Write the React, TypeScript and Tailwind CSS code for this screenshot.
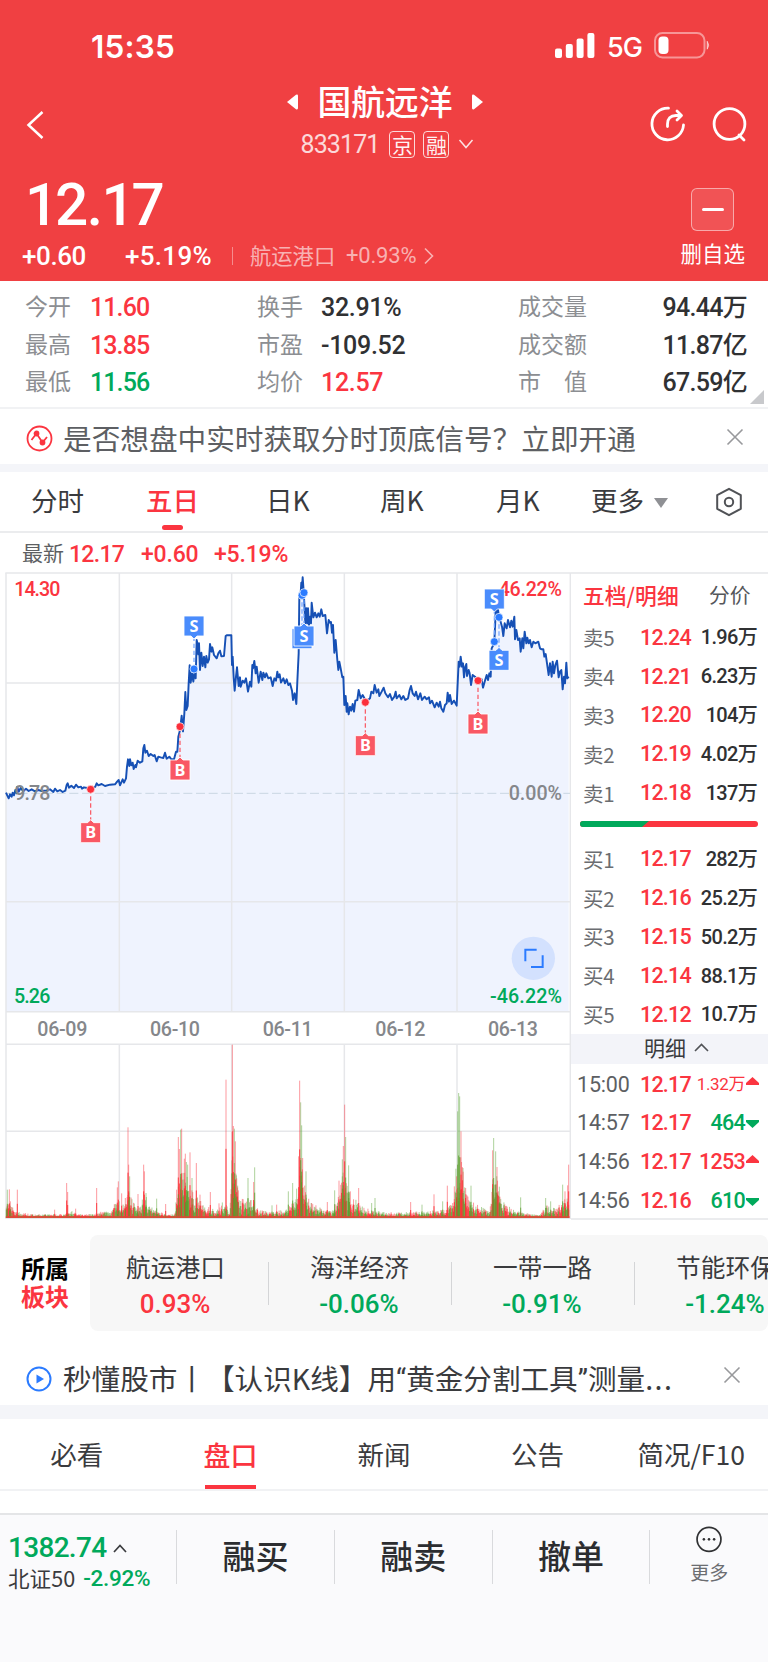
import React from "react";

const CJK = "font-['Noto_Sans_CJK_SC',sans-serif]";
const NUM = "font-['Roboto','Noto_Sans_CJK_SC',sans-serif]";

/* ---------- chart data, in thirds of a pixel ---------- */

const PRICE =
  "18,698 22,707 26,715 30,703 35,710 38,698 42,706 46,690 50,700 52,680 56,695 62,684 70,694 78,686 86,693 95,688 105,694 115,690 125,693 140,691 150,688 160,696 165,686 172,694 180,690 188,696 196,692 200,675 203,670 207,683 214,677 222,684 228,674 235,682 243,680 246,686 252,682 262,684 270,688 280,684 286,680 290,670 295,676 305,672 315,678 330,674 345,673 352,664 356,660 360,676 368,658 372,668 378,655 381,620 384,598 388,618 390,598 394,616 398,608 401,627 406,615 408,622 413,602 420,608 427,604 430,565 433,555 436,578 441,572 446,588 452,582 460,588 464,585 470,604 475,590 482,592 490,594 495,578 500,596 508,590 514,598 522,598 528,575 532,575 535,530 540,510 545,467 549,514 553,460 556,396 559,450 563,438 566,370 569,316 572,368 576,340 580,365 584,330 587,355 590,240 592,250 595,283 597,250 600,330 604,278 608,318 612,290 616,322 619,288 623,308 627,298 630,252 634,275 637,262 642,285 650,295 655,280 660,272 664,289 672,288 677,228 680,226 694,226 696,315 698,290 701,352 704,392 708,350 711,322 716,378 720,352 722,380 728,362 733,368 738,355 744,395 750,365 754,380 757,315 759,325 763,303 767,340 770,320 776,368 782,335 787,360 790,338 795,352 799,340 805,355 812,352 818,378 823,355 828,362 832,335 835,352 839,343 843,368 850,355 855,370 860,358 865,375 870,370 876,392 879,420 884,400 889,432 892,365 896,280 898,110 902,100 904,68 906,85 908,52 911,95 913,130 916,190 919,145 922,190 924,145 927,195 930,170 933,190 935,128 940,172 945,158 950,172 955,160 959,170 964,148 968,168 976,165 981,220 986,180 990,188 993,186 996,218 999,195 1003,278 1007,240 1012,300 1015,330 1018,305 1022,325 1027,352 1030,350 1033,435 1037,408 1040,455 1042,430 1046,463 1050,440 1054,452 1058,432 1062,455 1066,422 1072,420 1076,390 1082,415 1088,405 1096,420 1104,420 1110,415 1114,395 1120,400 1124,375 1130,398 1135,388 1138,408 1145,395 1151,383 1156,400 1164,412 1170,402 1176,420 1183,410 1187,395 1190,415 1198,405 1204,418 1210,408 1216,420 1224,415 1229,390 1233,378 1238,400 1244,408 1248,395 1254,418 1261,400 1266,420 1274,410 1280,418 1287,412 1290,430 1296,422 1304,442 1310,428 1316,440 1320,425 1324,445 1330,455 1335,435 1340,430 1343,398 1347,425 1350,405 1355,432 1362,422 1370,437 1373,370 1376,305 1379,320 1382,290 1386,320 1389,310 1392,352 1396,320 1399,312 1401,348 1406,330 1409,340 1413,375 1418,345 1425,350 1434,362 1445,358 1449,383 1454,365 1460,345 1464,360 1468,340 1472,350 1475,265 1480,255 1483,245 1486,180 1488,120 1491,165 1494,148 1497,172 1501,182 1506,200 1510,228 1514,190 1520,205 1524,180 1530,202 1534,182 1538,200 1543,170 1545,238 1549,210 1554,240 1559,235 1562,275 1567,235 1570,265 1574,215 1579,250 1582,233 1586,250 1590,240 1595,262 1600,245 1606,250 1615,245 1620,265 1625,268 1630,268 1633,290 1637,282 1641,310 1646,345 1650,310 1655,350 1658,305 1662,340 1666,315 1671,302 1676,352 1680,335 1684,330 1688,388 1692,350 1695,370 1699,308 1702,355 1706,350";

const ENVELOPE: [number, number][] = [
  [18, 60], [30, 35], [40, 22], [60, 12], [100, 8], [190, 8], [205, 20], [230, 8], [285, 8], [300, 14], [330, 14], [345, 35], [357, 50], [365, 30], [380, 60], [390, 60], [400, 40], [415, 20], [425, 40], [435, 70], [445, 30], [470, 15], [500, 8], [525, 8], [532, 80], [545, 120], [560, 100], [575, 70], [590, 55], [610, 30], [650, 20], [670, 40], [680, 30], [690, 8], [695, 160], [705, 190], [712, 80], [725, 45], [760, 45], [775, 20], [810, 12], [860, 20], [880, 45], [893, 60], [900, 170], [908, 120], [918, 60], [940, 35], [970, 18], [1000, 18], [1015, 50], [1030, 120], [1040, 80], [1055, 55], [1080, 30], [1120, 15], [1200, 12], [1280, 15], [1340, 20], [1362, 40], [1370, 150], [1385, 160], [1395, 70], [1410, 40], [1450, 25], [1470, 20], [1480, 130], [1492, 100], [1505, 40], [1540, 20], [1590, 8], [1620, 8], [1640, 30], [1670, 25], [1690, 45], [1707, 60],
];

const SPIKES: [number, number, "r" | "g"][] = [
  [22, 85, "g"], [28, 86, "r"], [31, 50, "r"], [52, 85, "r"], [164, 25, "r"], [200, 105, "r"], [203, 78, "r"], [227, 28, "r"], [290, 90, "r"], [352, 92, "r"], [355, 110, "r"], [365, 74, "r"], [376, 60, "r"], [384, 272, "r"], [386, 160, "r"], [389, 125, "g"], [414, 72, "r"], [431, 160, "r"], [433, 140, "r"], [438, 75, "g"], [470, 58, "g"], [497, 42, "r"], [530, 85, "r"], [535, 243, "r"], [538, 207, "r"], [542, 265, "g"], [545, 268, "r"], [553, 178, "r"], [556, 193, "r"], [559, 168, "g"], [563, 160, "g"], [570, 197, "r"], [576, 120, "g"], [589, 165, "r"], [600, 70, "r"], [631, 78, "r"], [657, 44, "r"], [678, 415, "r"], [697, 520, "r"], [700, 276, "r"], [703, 268, "g"], [706, 230, "r"], [709, 128, "g"], [713, 97, "g"], [744, 120, "g"], [761, 108, "r"], [764, 152, "g"], [816, 38, "g"], [830, 40, "r"], [865, 80, "g"], [878, 105, "g"], [890, 88, "g"], [896, 185, "r"], [899, 412, "r"], [902, 347, "g"], [905, 278, "g"], [908, 180, "r"], [918, 140, "g"], [935, 45, "r"], [982, 48, "r"], [1004, 83, "g"], [1017, 112, "r"], [1027, 176, "g"], [1030, 216, "r"], [1034, 340, "r"], [1037, 243, "g"], [1046, 158, "g"], [1051, 80, "r"], [1076, 90, "r"], [1115, 45, "g"], [1125, 60, "g"], [1232, 48, "r"], [1266, 40, "g"], [1302, 71, "r"], [1328, 50, "g"], [1342, 97, "r"], [1363, 95, "r"], [1370, 125, "r"], [1373, 320, "g"], [1376, 375, "g"], [1379, 365, "g"], [1383, 260, "r"], [1389, 150, "g"], [1397, 90, "r"], [1413, 97, "g"], [1478, 203, "r"], [1481, 240, "g"], [1487, 200, "g"], [1491, 153, "r"], [1498, 94, "g"], [1562, 62, "g"], [1637, 60, "g"], [1652, 50, "g"], [1688, 100, "g"], [1695, 80, "r"], [1703, 98, "r"], [1706, 160, "r"],
];

function levelAt(u: number) {
  for (let i = 1; i < ENVELOPE.length; i++) {
    const [u1, h1] = ENVELOPE[i];
    if (u <= u1) {
      const [u0, h0] = ENVELOPE[i - 1];
      return h0 + ((h1 - h0) * (u - u0)) / (u1 - u0);
    }
  }
  return ENVELOPE[ENVELOPE.length - 1][1];
}

function buildVolume() {
  const paths = { r: "", g: "", rl: "", gl: "" };
  let seed = 7;
  const rnd = () => {
    seed = (seed * 16807) % 2147483647;
    return seed / 2147483647;
  };
  const bar = (u: number, h: number) => `M${u.toFixed(1)} 1974V${(1974 - h).toFixed(1)}`;
  for (let u = 19; u < 1708; u += 2.4) {
    const level = levelAt(u);
    const tall = level * (0.5 + rnd() * 0.75) + 2;
    const solid = tall * (0.4 + rnd() * 0.45);
    if (rnd() > 0.52) {
      paths.rl += bar(u, tall);
      paths.r += bar(u, solid);
    } else {
      paths.gl += bar(u, tall);
      paths.g += bar(u, solid);
    }
    paths.r += bar(u, 5);
  }
  for (const [u, h, c] of SPIKES) {
    if (c === "r") {
      paths.rl += bar(u, h);
      paths.r += bar(u, h * 0.5);
    } else {
      paths.gl += bar(u, h);
      paths.g += bar(u, h * 0.5);
    }
  }
  return paths;
}

const VOLUME = buildVolume();

type Marker = { kind: "S" | "B"; x: number; y: number; top: number };
const MARKERS: Marker[] = [
  { kind: "B", x: 272, y: 688, top: 788 },
  { kind: "B", x: 540, y: 500, top: 600 },
  { kind: "S", x: 582, y: 327, top: 168 },
  { kind: "S", x: 906, y: 106, top: 206 },
  { kind: "S", x: 912, y: 98, top: 198 },
  { kind: "B", x: 1096, y: 427, top: 527 },
  { kind: "B", x: 1434, y: 362, top: 462 },
  { kind: "S", x: 1483, y: 245, top: 87 },
  { kind: "S", x: 1497, y: 172, top: 271 },
];

function Flag({ kind, x, y, top }: Marker) {
  const buy = kind === "B";
  const above = top < y;
  const edge = above ? top + 60 : top;
  const tip = above ? edge + 9 : edge - 9;
  return (
    <g>
      <line x1={x} y1={y} x2={x} y2={tip} stroke={buy ? "#fa5560" : "#6ea3ff"} strokeWidth="3.6" strokeDasharray="13 8" />
      <circle cx={x} cy={y} r="12" fill={buy ? "#fb2f3b" : "#2b7bff"} stroke="#fff" strokeWidth="2" />
      <path
        d={
          above
            ? `M${x - 30} ${top}h60v60h-21l-9 9l-9 -9h-21z`
            : `M${x - 30} ${top}h21l9 -9l9 9h21v60h-60z`
        }
        fill={buy ? "#f95864" : "#4a8cfc"}
        stroke="#fff"
        strokeWidth="2.5"
      />
      <text x={x} y={top + 47} textAnchor="middle" fontSize="49" className="fill-white font-['Noto_Sans',sans-serif] font-bold">
        {kind}
      </text>
    </g>
  );
}

function Chart() {
  const days = ["06-09", "06-10", "06-11", "06-12", "06-13"];
  return (
    <svg width="571" height="648" viewBox="0 36 1713 1944" className="block shrink-0">
      <path d={`M18 1355V698L${PRICE} V1355Z`} fill="#eff3fe" />
      <g stroke="#e6e7ea" strokeWidth="4.5" fill="none">
        <path d="M16 39H1713M18 369H1710M18 1025H1710M18 1355H1710M18 1453H1710M18 1714H1710M16 1975H1713" />
        <path d="M18 39V1975M1711 39V1975M358 39V1355M695 39V1355M1033 39V1355M1371 39V1355M358 1453V1975M695 1453V1975M1033 1453V1975M1371 1453V1975" />
      </g>
      <path d="M18 700H1710" stroke="#c9d6e2" strokeWidth="3" strokeDasharray="27 11" />
      <polyline points={PRICE} fill="none" stroke="#1650b5" strokeWidth="5.8" strokeLinejoin="round" />
      <g className="font-['Roboto',sans-serif] font-medium" fontSize="59">
        <text x="43" y="108" fill="#fb3540" textLength="138">14.30</text>
        <text x="1686" y="108" textAnchor="end" fill="#fb3540" textLength="190">46.22%</text>
        <text x="43" y="720" fill="#85878b" textLength="108">9.78</text>
        <text x="1686" y="720" textAnchor="end" fill="#85878b" textLength="160">0.00%</text>
        <text x="42" y="1330" fill="#00a95b" textLength="109">5.26</text>
        <text x="1686" y="1330" textAnchor="end" fill="#00a95b" textLength="216">-46.22%</text>
        {days.map((d, i) => (
          <text key={d} x={187 + i * 338} y="1427" textAnchor="middle" fill="#85878b" textLength="150">
            {d}
          </text>
        ))}
      </g>
      {MARKERS.map((m) => (
        <Flag key={m.x} {...m} />
      ))}
      <g strokeWidth="3" fill="none">
        <path d={VOLUME.gl} stroke="#5da63a" strokeOpacity="0.5" />
        <path d={VOLUME.rl} stroke="#fb3540" strokeOpacity="0.5" />
        <path d={VOLUME.r} stroke="#fb2f35" strokeOpacity="0.85" />
        <path d={VOLUME.g} stroke="#5a9a2a" strokeOpacity="0.75" />
        <path d="M18 1971H1708" stroke="#e0473a" strokeWidth="5" />
      </g>
      <circle cx="1600" cy="1195" r="65" fill="#d3e1fe" />
      <path d="M1610 1169H1576V1204M1628 1186V1221H1593" fill="none" stroke="#2b7bff" strokeWidth="6" />
    </svg>
  );
}

/* ---------- page sections ---------- */

function Header() {
  return (
    <header className="h-[281px] shrink-0 bg-[#f04042] text-white">
      <div className="flex h-[80px] items-start pl-[91px] pr-[56px] pt-[29px]">
        <span className="w-[120px] font-['Inter',sans-serif] text-[31.5px] font-semibold leading-[35px] tracking-[0.2px]">15:35</span>
        <svg className="ml-auto mt-[4px]" width="40" height="26" viewBox="0 0 40 26" fill="#fff">
          <rect x="0" y="15.5" width="7" height="9.5" rx="2" />
          <rect x="10.8" y="11" width="7" height="14" rx="2" />
          <rect x="21.6" y="5.5" width="7" height="19.5" rx="2" />
          <rect x="32.4" y="0" width="7" height="25" rx="2" />
        </svg>
        <span className="ml-[12px] mt-[1px] w-[35px] font-['Inter',sans-serif] text-[27px] font-medium leading-[35px] tracking-[-1px]">5G</span>
        <svg className="ml-[12px] mt-[3px]" width="58" height="27" viewBox="0 0 58 27">
          <rect x="1" y="1" width="49.5" height="24.5" rx="7.5" fill="none" stroke="#fff" strokeOpacity="0.45" strokeWidth="2" />
          <rect x="4.5" y="4.5" width="10" height="17.5" rx="4" fill="#fff" />
          <path d="M53.2 9.2q3 4 0 8z" fill="#fff" stroke="#fff" strokeOpacity="0.5" fillOpacity="0.5" />
        </svg>
      </div>

      <div className="flex h-[84px] items-start justify-between pl-[25px] pr-[20px]">
        <svg className="mt-[29px]" width="20" height="32" viewBox="0 0 20 32" fill="none" stroke="#fff" strokeWidth="2.5">
          <path d="M17.5 3L3.5 16L17.5 29" />
        </svg>
        <div className="flex flex-col items-center pl-[76px]">
          <div className="flex h-[44px] items-center gap-[18px]">
            <svg width="13" height="16" viewBox="0 0 13 16" fill="#fff"><path d="M1 8L10 .8Q12 0 12 2V14Q12 16 10 15.2Z" /></svg>
            <h1 className={`${CJK} -mt-[2px] text-[33.8px] font-medium leading-[44px]`}>国航远洋</h1>
            <svg width="13" height="16" viewBox="0 0 13 16" fill="#fff"><path d="M12 8L3 .8Q1 0 1 2V14Q1 16 3 15.2Z" /></svg>
          </div>
          <div className="mt-[2px] flex h-[36px] items-center pl-[5px]">
            <span className={`${NUM} text-[25px] leading-none tracking-[-0.9px] opacity-80`}>833171</span>
            <span className={`${CJK} ml-[10px] flex h-[27px] w-[26px] items-center justify-center rounded-[4px] border border-white/80 text-[21px] leading-none text-white/95`}>京</span>
            <span className={`${CJK} ml-[8px] flex h-[27px] w-[26px] items-center justify-center rounded-[4px] border border-white/80 text-[21px] leading-none text-white/95`}>融</span>
            <svg className="ml-[9px]" width="16" height="12" viewBox="0 0 16 12" fill="none" stroke="#fff" strokeOpacity="0.85" strokeWidth="1.5"><path d="M1.5 2L8 9.5L14.5 2" /></svg>
          </div>
        </div>
        <div className="mt-[25px] flex gap-[24px]">
          <svg width="38" height="38" viewBox="0 0 38 38" fill="none" stroke="#fff" strokeWidth="2.8" strokeLinecap="round" strokeLinejoin="round">
            <path d="M19.5 3.2A15.8 15.8 0 1 0 34.5 20" />
            <path d="M18.5 21.5V19Q18.5 10.5 27 10.5H32M28 6L32.5 10.5L28 15" />
          </svg>
          <svg width="37" height="38" viewBox="0 0 37 38" fill="none" stroke="#fff" strokeWidth="2.8" strokeLinecap="round">
            <circle cx="18.5" cy="19" r="15.4" />
            <path d="M28 30L33 35" />
          </svg>
        </div>
      </div>

      <div className="flex h-[117px] justify-between pl-[22px] pr-[23px]">
        <div>
          <div className={`${NUM} mt-[11px] h-[60px] pl-[3px] text-[58.5px] font-medium leading-[60px] tracking-[-3.2px]`}>1<span className="tracking-[-1.6px]">2.</span>17</div>
          <div className={`${NUM} mt-[6px] flex h-[30px] items-center leading-none`}>
            <span className="w-[103px] text-[26px] font-medium tracking-[-0.4px]">+0.60</span>
            <span className="w-[107px] text-[26px] font-medium tracking-[0.3px]">+5.19%</span>
            <span className="h-[18px] w-px bg-white/40" />
            <span className={`${CJK} -mt-[3px] ml-[17px] w-[96px] text-[21.3px] text-white/60`}>航运港口</span>
            <span className="w-[77px] text-[22px] tracking-[-0.2px] text-white/60">+0.93%</span>
            <svg width="12" height="18" viewBox="0 0 12 18" fill="none" stroke="#fff" strokeOpacity="0.6" strokeWidth="1.6"><path d="M2 1.5L9.5 9L2 16.5" /></svg>
          </div>
        </div>
        <div className="flex flex-col items-center pt-[24px]">
          <div className="flex size-[43px] items-center justify-center rounded-[6px] border border-white/50 bg-white/10">
            <span className="h-[3px] w-[22px] rounded bg-white" />
          </div>
          <span className={`${CJK} mt-[10px] text-[21.5px] leading-[24px]`}>删自选</span>
        </div>
      </div>
    </header>
  );
}

const STATS = [
  ["今开", "11.60", "text-[#fb3540]", "换手", "32.91%", "text-[#303133]", "成交量", "94.44万"],
  ["最高", "13.85", "text-[#fb3540]", "市盈", "-109.52", "text-[#303133]", "成交额", "11.87亿"],
  ["最低", "11.56", "text-[#00a95b]", "均价", "12.57", "text-[#fb3540]", "市　值", "67.59亿"],
];

function Stats() {
  return (
    <section className="relative h-[128px] shrink-0 border-b-2 border-[#f1f2f4] pt-[8px]">
      {STATS.map((s) => (
        <div key={s[0]} className={`${NUM} flex h-[37.5px] items-center pl-[25px] pr-[21px] text-[25px] leading-none`}>
          <span className={`${CJK} -mt-[4px] w-[65px] text-[23px] text-[#8c8e92]`}>{s[0]}</span>
          <span className={`w-[167px] font-medium tracking-[-0.9px] ${s[2]}`}>{s[1]}</span>
          <span className={`${CJK} -mt-[4px] w-[64px] text-[23px] text-[#8c8e92]`}>{s[3]}</span>
          <span className={`w-[197px] font-medium tracking-[-0.3px] ${s[5]}`}>{s[4]}</span>
          <span className={`${CJK} -mt-[4px] text-[23px] text-[#8c8e92]`}>{s[6]}</span>
          <span className="ml-auto font-medium tracking-[-0.7px] text-[#303133]">{s[7]}</span>
        </div>
      ))}
      <svg className="absolute right-[4px] bottom-[3px]" width="14" height="14" viewBox="0 0 14 14"><path d="M14 0V14H0Z" fill="#c8c9cc" /></svg>
    </section>
  );
}

function Cross() {
  return (
    <svg width="18" height="18" viewBox="0 0 18 18" fill="none" stroke="#98999c" strokeWidth="1.6"><path d="M1.5 1.5L16.5 16.5M16.5 1.5L1.5 16.5" /></svg>
  );
}

function Notice() {
  return (
    <section className="flex h-[63px] shrink-0 items-center border-b-8 border-[#f4f5f9] pl-[26px] pr-[24px]">
      <svg className="mt-[4px]" width="27" height="27" viewBox="0 0 27 27" fill="none" stroke="#fb3540" strokeWidth="1.8">
        <circle cx="13.5" cy="13.5" r="12" />
        <path d="M5.5 15L10.5 8.5L16.5 17.5L21 12" />
        <circle cx="10.5" cy="8.5" r="2" fill="#fb3540" />
        <circle cx="16.5" cy="17.5" r="2" fill="#fb3540" />
      </svg>
      <span className={`${CJK} ml-[10px] mt-[3px] whitespace-nowrap text-[28.65px] leading-none text-[#5d5f63]`}>是否想盘中实时获取分时顶底信号？立即开通</span>
      <span className="ml-auto"><Cross /></span>
    </section>
  );
}

function PeriodTabs() {
  const tab = "-mt-[2px] text-[26.5px] leading-none text-[#3a3b3e]";
  return (
    <nav className={`${CJK} flex h-[61px] shrink-0 items-center border-b-2 border-[#ebecee] pl-[31px] pr-[25px]`}>
      <span className={`${tab} w-[115px]`}>分时</span>
      <span className="flex h-full w-[120px] flex-col">
        <span className="pt-[14px] text-[26.5px] font-medium leading-[27px] text-[#fb3540]">五日</span>
        <span className="ml-[16px] mt-[12px] h-[5px] w-[21px] rounded-[3px] bg-[#fb3540]" />
      </span>
      <span className={`${tab} w-[114px]`}>日K</span>
      <span className={`${tab} w-[116px]`}>周K</span>
      <span className={`${tab} w-[95px]`}>月K</span>
      <span className={tab}>更多</span>
      <svg className="ml-[10px] mt-[2px]" width="14" height="10" viewBox="0 0 14 10"><path d="M0 0H14L7 10Z" fill="#8f9094" /></svg>
      <svg className="ml-auto" width="28" height="30" viewBox="0 0 28 30" fill="none" stroke="#505256" strokeWidth="2" strokeLinejoin="round">
        <path d="M14 1.8L25.8 8.2V21.8L14 28.2L2.2 21.8V8.2Z" />
        <circle cx="14" cy="15" r="4.2" />
      </svg>
    </nav>
  );
}

const ASKS = [["卖5", "12.24", "1.96万"], ["卖4", "12.21", "6.23万"], ["卖3", "12.20", "104万"], ["卖2", "12.19", "4.02万"], ["卖1", "12.18", "137万"]];
const BIDS = [["买1", "12.17", "282万"], ["买2", "12.16", "25.2万"], ["买3", "12.15", "50.2万"], ["买4", "12.14", "88.1万"], ["买5", "12.12", "10.7万"]];
const TRADES: [string, string, string, boolean][] = [["15:00", "12.17", "1.32万", true], ["14:57", "12.17", "464", false], ["14:56", "12.17", "1253", true], ["14:56", "12.16", "610", false]];

function Levels({ rows }: { rows: string[][] }) {
  return (
    <>
      {rows.map(([label, price, size]) => (
        <div key={label} className={`${NUM} flex h-[38.9px] items-center pl-[12px] pr-[11px] leading-none`}>
          <span className={`${CJK} w-[57px] text-[20.5px] tracking-[-0.3px] text-[#6b6d71]`}>{label}</span>
          <span className="text-[21.5px] font-medium tracking-[-0.8px] text-[#fb3540]">{price}</span>
          <span className="ml-auto whitespace-nowrap text-[20px] font-medium tracking-[-0.7px] text-[#303133]">{size}</span>
        </div>
      ))}
    </>
  );
}

function OrderBook() {
  return (
    <aside className="h-[648px] w-[197px] shrink-0 border-y-2 border-[#ebecee]">
      <div className={`${CJK} flex h-[44px] items-center pb-[3px] pl-[12px] leading-none`}>
        <span className="w-[126px] text-[21.8px] font-medium text-[#fb3540]">五档/明细</span>
        <span className="text-[20.8px] text-[#55575b]">分价</span>
      </div>
      <Levels rows={ASKS} />
      <div className="ml-[9px] mt-[9px] flex h-[6px] w-[178px] overflow-hidden rounded-full bg-[#fb3540]">
        <svg width="69" height="6" viewBox="0 0 69 6"><path d="M0 0H69L62 6H0Z" fill="#00a95b" /></svg>
      </div>
      <div className="h-[12px]" />
      <Levels rows={BIDS} />
      <div className={`${CJK} flex h-[30px] items-center justify-center gap-[8px] bg-[#f3f4f9] pb-[2px] pl-[14px] text-[21px] leading-none text-[#3a3b3e]`}>
        明细
        <svg width="15" height="9" viewBox="0 0 15 9" fill="none" stroke="#505256" strokeWidth="1.6"><path d="M1 8L7.5 1.5L14 8" /></svg>
      </div>
      {TRADES.map(([time, price, size, up]) => (
        <div key={time + price + size} className={`${NUM} flex h-[38.9px] items-center pl-[6px] pr-[9px] pt-[2px] text-[21.5px] leading-none`}>
          <span className="w-[63px] tracking-[-0.2px] text-[#5d5f63]">{time}</span>
          <span className="font-medium tracking-[-0.8px] text-[#fb3540]">{price}</span>
          <span className={`ml-auto whitespace-nowrap ${size.length === 5 ? "text-[17px] tracking-[-0.4px]" : "font-medium tracking-[-0.7px]"} ${up ? "text-[#fb3540]" : "text-[#00a95b]"}`}>{size}</span>
          {up ? (
            <svg className="-mt-[7px] ml-[1px]" width="13" height="8" viewBox="0 0 13 8"><path d="M6.5 0L13 6V8H0V6Z" fill="#fb3540" /></svg>
          ) : (
            <svg className="ml-[1px] mt-[2px]" width="13" height="8" viewBox="0 0 13 8"><path d="M6.5 8L13 2V0H0V2Z" fill="#00a95b" /></svg>
          )}
        </div>
      ))}
    </aside>
  );
}

const SECTORS = [["航运港口", "0.93%"], ["海洋经济", "-0.06%"], ["一带一路", "-0.91%"], ["节能环保", "-1.24%"]];

function Sectors() {
  return (
    <section className="flex h-[96px] w-full shrink-0 overflow-hidden">
      <div className={`${CJK} flex w-[90px] shrink-0 flex-col justify-center gap-[3px] pb-[3px] pl-[21px] text-[24px] font-bold leading-[25px] text-black`}>
        <span>所属</span>
        <span className="text-[#fb3540]">板块</span>
      </div>
      <div className="flex w-[678px] shrink-0 overflow-hidden rounded-[8px] bg-[#f7f7f7]">
        {SECTORS.map(([name, pct], i) => (
          <div key={name} className={`flex shrink-0 items-center ${i === 0 ? "w-[179px]" : "w-[183px]"}`}>
            <div className={`flex flex-1 flex-col items-center whitespace-nowrap pt-[5px] ${i === 0 ? "pr-[7px]" : "pr-[1px]"}`}>
              <span className={`${CJK} text-[24.7px] leading-[32px] text-[#3a3b3e]`}>{name}</span>
              <span className={`${NUM} mt-[5px] pr-[1px] text-[26px] font-medium leading-[34px] ${i === 0 ? "text-[#fb3540]" : "text-[#00a95b]"}`}>{pct}</span>
            </div>
            <span className="h-[43px] w-px bg-[#d4d5d7]" />
          </div>
        ))}
      </div>
    </section>
  );
}

function Lesson() {
  return (
    <section className="flex h-[88px] shrink-0 items-center border-b-[14px] border-[#f4f5f9] pl-[26px] pr-[27px] pt-[22px]">
      <svg width="26" height="26" viewBox="0 0 26 26" fill="none" stroke="#2b7bff" strokeWidth="2">
        <circle cx="13" cy="13" r="11.5" />
        <path d="M10.5 8.5L18 13L10.5 17.5Z" fill="#2b7bff" stroke="none" />
      </svg>
      <span className={`${CJK} ml-[11px] whitespace-nowrap text-[28.6px] leading-none text-[#3a3b3e]`}>
        秒懂股市丨【认识K线】用<span className="font-['Roboto',sans-serif]">“</span>黄金分割工具<span className="font-['Roboto',sans-serif]">”</span>测量<span className="tracking-[1.5px]">...</span>
      </span>
      <span className="-mt-[8px] ml-auto"><Cross /></span>
    </section>
  );
}

function BottomBar() {
  return (
    <footer className="flex h-[149px] shrink-0 items-start border-t-2 border-[#e4e5e7] bg-[#fafafc] pt-[15px]">
      <div className="flex h-[54px] w-[176px] shrink-0 flex-col pl-[8px] pt-[4px]">
        <div className="flex h-[28px] items-center">
          <span className={`${NUM} text-[28px] font-medium leading-none tracking-[-0.7px] text-[#00a95b]`}>1382.74</span>
          <svg className="ml-[7px]" width="14" height="9" viewBox="0 0 14 9" fill="none" stroke="#3a3b3e" strokeWidth="1.7"><path d="M1 8L7 1.5L13 8" /></svg>
        </div>
        <div className="mt-[5px] flex h-[26px] items-center whitespace-nowrap leading-none">
          <span className={`${CJK} text-[21.6px] text-[#3a3b3e]`}>北证50</span>
          <span className={`${NUM} ml-[8px] text-[22.5px] font-medium tracking-[-0.3px] text-[#00a95b]`}>-2.92%</span>
        </div>
      </div>
      {["融买", "融卖", "撤单"].map((t) => (
        <div key={t} className={`${CJK} flex h-[54px] w-[157.8px] items-center justify-center border-l border-[#d9dadd] pb-[3px] text-[33px] font-medium leading-none text-[#2c2d30]`}>{t}</div>
      ))}
      <div className="flex h-[54px] flex-1 flex-col items-center border-l border-[#d9dadd]">
        <svg className="-mt-[6px]" width="32" height="34" viewBox="0 -2 32 34" fill="none" stroke="#303133" strokeWidth="2">
          <circle cx="16" cy="16" r="14" />
          <g fill="#303133" stroke="none"><circle cx="10" cy="16" r="1.5" /><circle cx="16" cy="16" r="1.5" /><circle cx="22" cy="16" r="1.5" /></g>
        </svg>
        <span className={`${CJK} mt-[7px] text-[19px] leading-[24px] text-[#6b6d71]`}>更多</span>
      </div>
    </footer>
  );
}

export default function App() {
  const info = "flex-1 text-center text-[26.5px] text-[#3a3b3e]";
  return (
    <div className="flex h-[1662px] w-[768px] flex-col overflow-hidden bg-white">
      <Header />
      <Stats />
      <Notice />
      <PeriodTabs />
      <div className={`${NUM} flex h-[39px] shrink-0 items-center pl-[22px] pt-[3px] text-[23px] font-medium leading-none tracking-[-0.2px] text-[#fb3540]`}>
        <span className={`${CJK} -mt-[3px] w-[47px] text-[21px] font-normal tracking-normal text-[#5d5f63]`}>最新</span>
        <span className="w-[72px] tracking-[-0.7px]">12.17</span>
        <span className="w-[73px]">+0.60</span>
        <span>+5.19%</span>
      </div>
      <div className="flex shrink-0">
        <Chart />
        <OrderBook />
      </div>
      <div className="h-[15px] shrink-0" />
      <Sectors />
      <Lesson />
      <nav className={`${CJK} flex h-[72px] shrink-0 items-center border-b-2 border-[#f1f2f4] leading-none`}>
        <span className={info}>必看</span>
        <span className="flex h-full flex-1 flex-col items-center pt-[22px]">
          <span className="text-[27px] font-medium leading-[27px] text-[#fb3540]">盘口</span>
          <span className="mt-[17px] h-[4px] w-[51px] bg-[#fb3540]" />
        </span>
        <span className={info}>新闻</span>
        <span className={info}>公告</span>
        <span className={info}>简况/F10</span>
      </nav>
      <div className="flex-1" />
      <BottomBar />
    </div>
  );
}
